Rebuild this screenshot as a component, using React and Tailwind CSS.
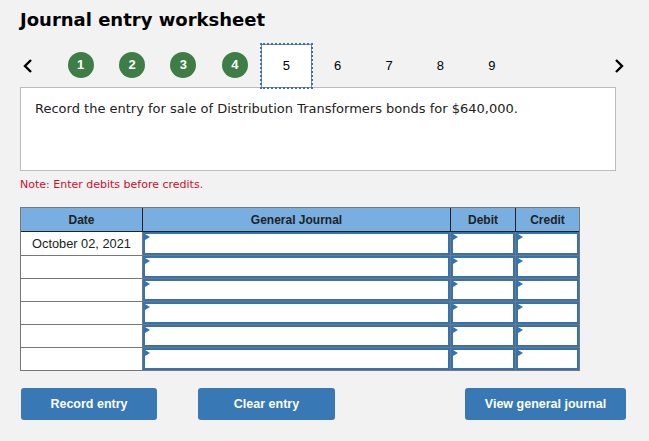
import React from "react";

const steps = [1, 2, 3, 4, 5, 6, 7, 8, 9];
const rows = ["October 02, 2021", "", "", "", "", ""];

const Chevron = ({ dir }) => (
  <svg width="12" height="16" viewBox="0 0 12 16" className="text-black">
    <polyline
      points={dir === "left" ? "9,2 3,8 9,14" : "3,2 9,8 3,14"}
      fill="none"
      stroke="currentColor"
      strokeWidth="2.4"
      strokeLinejoin="miter"
    />
  </svg>
);

const InputCell = () => (
  <div className="relative h-full bg-white border-2 border-[#3572b0]">
    <span className="absolute left-0 top-0 w-0 h-0 border-y-[3px] border-y-transparent border-l-[5px] border-l-[#3572b0]" />
  </div>
);

export default function App() {
  return (
    <div className="min-h-[441px] bg-[#f2f2f2] px-[20px] pt-[9px]" style={{ fontFamily: "'Liberation Sans', Arial, sans-serif" }}>
      {/* Title */}
      <h1 className="text-[18px] leading-[22px] font-bold text-black" style={{ fontFamily: "'DejaVu Sans', Verdana, sans-serif" }}>
        Journal entry worksheet
      </h1>

      {/* Step navigation */}
      <div className="relative z-10 mt-[13px] h-[44px] flex items-center">
        <div className="w-[16px] flex justify-center"><Chevron dir="left" /></div>
        <div className="ml-[19px] flex">
          {steps.map((n) => {
            if (n < 5)
              return (
                <div key={n} className="w-[51.4px] h-[44px] flex items-center justify-center">
                  <span className="w-[26px] h-[26px] -mt-[3px] rounded-full bg-[#3e7d45] text-white text-[13px] font-bold flex items-center justify-center">
                    {n}
                  </span>
                </div>
              );
            if (n === 5)
              return (
                <div key={n} className="w-[51.4px] h-[44px] flex items-center justify-center">
                  <div className="w-[53px] h-[44px] bg-white border border-[#888] outline-2 outline-dotted outline-[#3572b0] -outline-offset-1 flex items-center justify-center text-[13px] text-black">
                    {n}
                  </div>
                </div>
              );
            return (
              <div key={n} className="w-[51.4px] h-[44px] flex items-center justify-center text-[13px] text-black">
                {n}
              </div>
            );
          })}
        </div>
        <div className="ml-auto mr-[2px] w-[16px] flex justify-center"><Chevron dir="right" /></div>
      </div>

      {/* Question */}
      <div className="-mt-px w-[596px] h-[84px] bg-white border border-[#bbb] pl-[14px] pt-[12px]">
        <p className="text-[13px] leading-[18px] text-[#222]" style={{ fontFamily: "'DejaVu Sans', Verdana, sans-serif" }}>
          Record the entry for sale of Distribution Transformers bonds for $640,000.
        </p>
      </div>

      <p className="mt-[7px] text-[11px] leading-[14px] text-[#c8102e]" style={{ fontFamily: "'DejaVu Sans', Verdana, sans-serif" }}>
        Note: Enter debits before credits.
      </p>

      {/* Journal table */}
      <div className="mt-[15px] w-[560px] border border-[#777] bg-white">
        <div className="grid grid-cols-[121px_308px_65px_64px] h-[24px] bg-[#78aee0] border-b border-[#222] text-[12px] font-bold text-[#222]">
          <div className="flex items-center justify-center">Date</div>
          <div className="flex items-center justify-center border-l border-[#222]">General Journal</div>
          <div className="flex items-center justify-center border-l border-[#222]">Debit</div>
          <div className="flex items-center justify-center border-l border-[#222]">Credit</div>
        </div>
        {rows.map((d, i) => (
          <div
            key={i}
            className={`grid grid-cols-[121px_308px_65px_64px] h-[23px] ${i > 0 ? "border-t border-[#777]" : ""}`}
          >
            <div className="flex items-center justify-center text-[12.8px] text-[#222]">{d}</div>
            <div className="border-l border-[#777]"><InputCell /></div>
            <div className="border-l border-[#777]"><InputCell /></div>
            <div className="border-l border-[#777]"><InputCell /></div>
          </div>
        ))}
      </div>

      {/* Actions */}
      <div className="mt-[17px] flex items-center">
        <button className="ml-px w-[136px] h-[32px] rounded-[3px] bg-[#3778b5] text-white text-[12.5px] font-bold">
          Record entry
        </button>
        <button className="ml-[41px] w-[137px] h-[32px] rounded-[3px] bg-[#3778b5] text-white text-[12.5px] font-bold">
          Clear entry
        </button>
        <button className="ml-auto mr-[3px] w-[161px] h-[32px] rounded-[3px] bg-[#3778b5] text-white text-[12.5px] font-bold">
          View general journal
        </button>
      </div>
    </div>
  );
}
